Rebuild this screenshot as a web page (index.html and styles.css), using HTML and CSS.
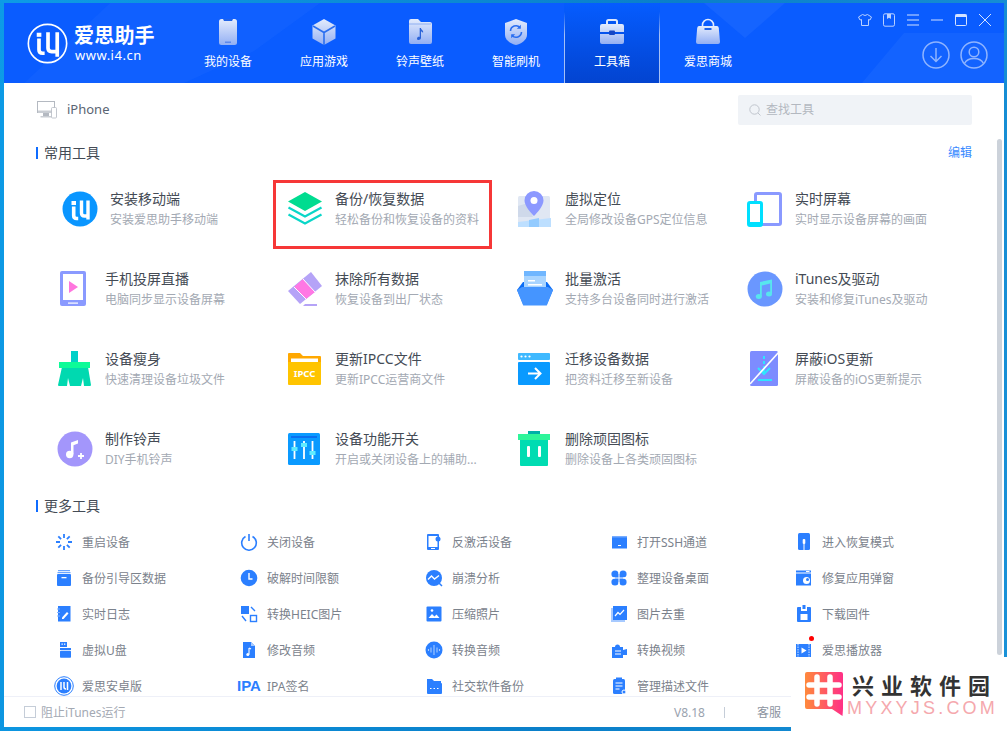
FILE: index.html
```html
<!DOCTYPE html>
<html lang="zh-CN">
<head>
<meta charset="utf-8">
<title>爱思助手</title>
<link rel="stylesheet" href="styles.css">
</head>
<body>
<svg class="defs" width="0" height="0" aria-hidden="true">
  <defs>
    <linearGradient id="g" x1="0" y1="0" x2="0" y2="1"><stop offset="0" stop-color="#e4ecfd"/><stop offset="1" stop-color="#93aff3"/></linearGradient>
    <linearGradient id="wm" x1="0" y1="0" x2="1" y2="0"><stop offset="0" stop-color="#ff8a3c"/><stop offset="1" stop-color="#ff2f86"/></linearGradient>
  </defs>
</svg>
<div class="app">
  <header class="header">
    <svg class="header-bg" viewBox="0 0 1000 80" preserveAspectRatio="none" aria-hidden="true">
      <polygon points="106,0 316,0 250,48 180,80 93,80 20,80" fill="#2a74ff" fill-opacity=".22"/>
      <polygon points="106,0 20,80 0,80 0,0" fill="#0a5cff"/>
      <polygon points="781,0 700,0 741,35" fill="#2a74ff" fill-opacity=".35"/>
      <polygon points="1000,30 900,30 858,80 1000,80" fill="#2a74ff" fill-opacity=".3"/>
    </svg>
    <div class="brand">
      <svg class="brand-mark" viewBox="0 0 40 40" aria-hidden="true">
        <circle cx="20" cy="20" r="18.700" fill="none" stroke="#fff" stroke-width="1.600"/>
        <rect x="9.500" y="9.500" width="4.500" height="4" fill="#fff"/>
        <path d="M11.700 15v11q0 3.500 3.500 3.500h2" fill="none" stroke="#fff" stroke-width="3.600"/>
        <path d="M20.500 9v15.500q0 3.500 3.500 3.500h4M29.500 9v24" fill="none" stroke="#fff" stroke-width="3.600"/>
      </svg>
      <div class="brand-text">
        <div class="brand-name">爱思助手</div>
        <div class="brand-url">www.i4.cn</div>
      </div>
    </div>
    <nav class="nav">
      <a class="nav-item">
        <svg class="nav-icon" viewBox="0 0 28 28"><rect x="5" y="1" width="18" height="26" rx="2.500" fill="url(#g)"/><path d="M9 1h10l-1 2h-8z" fill="#1f62e8"/><rect x="11" y="23.500" width="6" height="1.500" fill="#5d88ec"/></svg>
        <span>我的设备</span>
      </a>
      <a class="nav-item">
        <svg class="nav-icon" viewBox="0 0 28 28"><path d="M14 1l11.500 6.500v13L14 27 2.500 20.500v-13z" fill="url(#g)"/><path d="M3 8l11 6.500L25 8M14 14.500V27" fill="none" stroke="#2a6ef0" stroke-width="1.600"/></svg>
        <span>应用游戏</span>
      </a>
      <a class="nav-item">
        <svg class="nav-icon" viewBox="0 0 28 28"><path d="M3 3q0-2 2-2h7l3 3h9q2 0 2 2v18q0 2-2 2H5q-2 0-2-2z" fill="url(#g)"/><path d="M3 6h22" stroke="#7ea2f0" stroke-width=".8"/><path d="M15 10c0 2 3 2 2 5-.6-1.500-1.500-1.500-2-1.500v6.500c0 2-4 3-4 .5 0-1.500 2-2 2.700-1.500V10z" fill="#2a62d8"/></svg>
        <span>铃声壁纸</span>
      </a>
      <a class="nav-item">
        <svg class="nav-icon" viewBox="0 0 28 28"><path d="M14 1l11 4v12c0 5-6 9-11 10C9 26 3 22 3 17V5z" fill="url(#g)"/><path d="M8.500 13a5.500 5.500 0 0 1 9.500-3.500M19.500 14a5.500 5.500 0 0 1-9.500 3.500" fill="none" stroke="#2a6ef0" stroke-width="1.600"/><path d="M18.800 6.800v4h-4zM9.200 20.200v-4h4z" fill="#2a6ef0"/></svg>
        <span>智能刷机</span>
      </a>
      <a class="nav-item nav-item-active">
        <svg class="nav-icon" viewBox="0 0 28 28"><path d="M9 6V3.500Q9 2 10.500 2h7Q19 2 19 3.500V6" fill="none" stroke="#dfe8fc" stroke-width="2"/><path d="M2 8q0-2 2-2h20q2 0 2 2v6H2zM2 16h24v8q0 2-2 2H4q-2 0-2-2z" fill="url(#g)"/><rect x="11" y="12.500" width="6" height="4.500" rx="1" fill="#1546c4"/></svg>
        <span>工具箱</span>
      </a>
      <a class="nav-item">
        <svg class="nav-icon" viewBox="0 0 28 28"><path d="M8.500 8V7a5.500 5.500 0 0 1 11 0v1" fill="none" stroke="#e4ecfd" stroke-width="1.600"/><path d="M5 8h18q1.500 0 1.800 2L26 24q0 2-2 2H4q-2 0-2-2L3.200 10Q3.500 8 5 8z" fill="url(#g)"/><rect x="10.500" y="10" width="7" height="2" fill="#1f62e8"/></svg>
        <span>爱思商城</span>
      </a>
    </nav>
    <div class="head-right">
      <div class="win-controls">
        <svg class="win-icon" viewBox="0 0 14 14"><path d="M4.500 1.500Q7 3.500 9.500 1.500L13.500 4 12 7l-1.500-.5V12.500h-7V6.500L2 7 .5 4z" fill="none" stroke="#b9d0ff" stroke-width="1"/></svg>
        <svg class="win-icon" viewBox="0 0 14 14"><rect x="1.500" y=".8" width="11" height="12.400" rx="1.500" fill="none" stroke="#b9d0ff"/><path d="M5 1h4v5L7 4.800 5 6z" fill="#b9d0ff"/></svg>
        <svg class="win-icon" viewBox="0 0 14 14"><path d="M1 2h12M1 7h12M1 12h12" stroke="#8fb4ff" stroke-width="1.300"/></svg>
        <svg class="win-icon" viewBox="0 0 14 14"><path d="M1 7h12" stroke="#a4c2ff" stroke-width="1.300"/></svg>
        <svg class="win-icon" viewBox="0 0 14 14"><rect x="1.500" y="1.500" width="11" height="11" rx="1" fill="none" stroke="#d5e3ff"/><rect x="1.500" y="1.500" width="11" height="2.500" fill="#d5e3ff"/></svg>
        <svg class="win-icon" viewBox="0 0 14 14"><path d="M1 1l12 12M13 1L1 13" stroke="#d5e3ff" stroke-width="1"/></svg>
      </div>
      <div class="head-actions">
        <svg class="act-icon" viewBox="0 0 28 28"><circle cx="14" cy="14" r="13" fill="none" stroke="#8fb4ff" stroke-width="1.500"/><path d="M14 7v13M8.500 15l5.500 5.500 5.500-5.500" fill="none" stroke="#8fb4ff" stroke-width="1.500"/></svg>
        <svg class="act-icon" viewBox="0 0 28 28"><circle cx="14" cy="14" r="13" fill="none" stroke="#8fb4ff" stroke-width="1.500"/><circle cx="14" cy="11" r="4.800" fill="none" stroke="#8fb4ff" stroke-width="1.500"/><path d="M4.500 22.500Q7 17.500 14 17.500T23.500 22.500" fill="none" stroke="#8fb4ff" stroke-width="1.500"/></svg>
      </div>
    </div>
  </header>

  <main class="main">
    <div class="toolbar">
      <div class="device">
        <svg class="device-icon" viewBox="0 0 20 18"><rect x=".5" y=".5" width="17" height="11" fill="#fff" stroke="#b4b9c1"/><rect x="1" y="9.500" width="16" height="2.500" fill="#c9cdd3"/><rect x="6" y="12" width="6" height="3" fill="#b4b9c1"/><rect x="3.500" y="15" width="11" height="1.500" fill="#c9cdd3"/><rect x="14.500" y="6.500" width="5" height="10.500" rx="1" fill="#fff" stroke="#b4b9c1" stroke-width=".8"/></svg>
        <span class="device-name">iPhone</span>
      </div>
      <div class="search">
        <svg class="search-icon" viewBox="0 0 12 12"><circle cx="5.500" cy="5.500" r="4.700" fill="none" stroke="#c0c5cd" stroke-width="1"/><path d="M9 9l2.500 2.500" stroke="#c0c5cd"/></svg>
        <span class="search-text">查找工具</span>
      </div>
    </div>

    <div class="section-head section-first">
      <h2 class="section-title">常用工具</h2>
      <a class="edit">编辑</a>
    </div>

    <div class="cards">
      <div class="card card-shift">
        <svg class="card-icon" viewBox="0 0 36 36"><circle cx="18" cy="18" r="17.500" fill="#0a96ff"/><rect x="9.500" y="10" width="4.500" height="4" fill="#fff"/><path d="M11.700 15.500v9q0 3 3 3h1.500" fill="none" stroke="#fff" stroke-width="3.600"/><path d="M19.500 9.500v12.500q0 3 3 3h4M26 9.500v19" fill="none" stroke="#fff" stroke-width="3.400"/></svg>
        <div class="card-text"><div class="card-title">安装移动端</div><div class="card-sub">安装爱思助手移动端</div></div>
      </div>
      <div class="card card-marked">
        <svg class="card-icon" viewBox="0 0 36 36"><path d="M18 1l17 9.500L18 20 1 10.500z" fill="#00dc90"/><path d="M1.500 16.500L18 25.500l16.500-9M1.500 23.500L18 32.500l16.500-9" fill="none" stroke="#0ad6c8" stroke-width="2.200"/></svg>
        <div class="card-text"><div class="card-title">备份/恢复数据</div><div class="card-sub">轻松备份和恢复设备的资料</div></div>
        <span class="mark"></span>
      </div>
      <div class="card">
        <svg class="card-icon" viewBox="0 0 36 36"><rect x="1" y="5" width="32" height="31" rx="1.500" fill="#e0e7f3"/><path d="M1 15l10-3 5 14H1z" fill="#cfd9ea"/><path d="M1 31l33-4v9H1z" fill="#bddfff"/><path d="M12 29l10-2v9H12z" fill="#93cbff"/><path d="M17 0a9.500 9.500 0 0 1 9.500 9.500C26.500 15 20 22 17 25 14 22 7.500 15 7.500 9.500A9.500 9.500 0 0 1 17 0z" fill="#8c99ff"/><circle cx="17" cy="9.500" r="3.500" fill="#fff"/></svg>
        <div class="card-text"><div class="card-title">虚拟定位</div><div class="card-sub">全局修改设备GPS定位信息</div></div>
      </div>
      <div class="card">
        <svg class="card-icon" viewBox="0 0 36 36"><rect x="8.500" y="2.500" width="25" height="31" rx="1.500" fill="#fff" stroke="#8a99ff" stroke-width="3"/><rect x="1.500" y="11.500" width="13" height="23" rx="1.500" fill="#fff" stroke="#00e0ff" stroke-width="3"/><rect x="1" y="31" width="14" height="3.500" fill="#00e0ff"/></svg>
        <div class="card-text"><div class="card-title">实时屏幕</div><div class="card-sub">实时显示设备屏幕的画面</div></div>
      </div>

      <div class="card">
        <svg class="card-icon" viewBox="0 0 36 36"><rect x="3" y="0" width="26" height="35" rx="2" fill="#8a9aff"/><rect x="6" y="3" width="20" height="26" fill="#fff"/><path d="M12 10l9 6-9 6z" fill="#ff75de"/><rect x="11" y="31.500" width="10" height="1.200" fill="#fff"/></svg>
        <div class="card-text"><div class="card-title">手机投屏直播</div><div class="card-sub">电脑同步显示设备屏幕</div></div>
      </div>
      <div class="card">
        <svg class="card-icon" viewBox="0 0 36 36"><path d="M24 1l11 14L13 33 1 20z" fill="#b5a3f7"/><path d="M16 8l12 13-9 7L7 16z" fill="#ff78e4"/><path d="M16 8l12 13M7 16l12 12" stroke="#fff" stroke-width="1"/><path d="M18 33h12v2H16z" fill="#b5a3f7"/></svg>
        <div class="card-text"><div class="card-title">抹除所有数据</div><div class="card-sub">恢复设备到出厂状态</div></div>
      </div>
      <div class="card">
        <svg class="card-icon" viewBox="0 0 36 36"><path d="M6 11L0 19l6 14h24l6-14-6-8z" fill="#0a6cf5"/><path d="M7 1q0-1 1-1h20q1 0 1 1v15H7z" fill="#a8d4ff"/><rect x="7" y="0" width="22" height="5" fill="#6fb6ff"/><rect x="11" y="9" width="7" height="1.500" fill="#fff"/><rect x="11" y="13" width="14" height="1.500" fill="#fff"/><path d="M0 19l5-3h26l5 3-6 15q0 .5-1 .5H7q-1 0-1-.5z" fill="#4595ff"/></svg>
        <div class="card-text"><div class="card-title">批量激活</div><div class="card-sub">支持多台设备同时进行激活</div></div>
      </div>
      <div class="card">
        <svg class="card-icon" viewBox="0 0 36 36"><circle cx="18" cy="18" r="17.500" fill="#6a97ff"/><path d="M13 11l12-2.500v14h-1.800V12.500L14.800 14.500v11H13z" fill="#57e6ee"/><ellipse cx="11.800" cy="25.500" rx="3" ry="2.500" fill="#57e6ee"/><ellipse cx="22" cy="23" rx="3" ry="2.500" fill="#57e6ee"/></svg>
        <div class="card-text"><div class="card-title">iTunes及驱动</div><div class="card-sub">安装和修复iTunes及驱动</div></div>
      </div>

      <div class="card">
        <svg class="card-icon" viewBox="0 0 36 36"><rect x="14" y="0" width="7" height="12" fill="#00d0c8"/><path d="M5 16h26l3 18q0 1-1 1H27l-1-8-2 8H13l-2-8-1 8H2q-1 0-1-1z" fill="#00d9b0"/><rect x="2" y="11" width="31" height="6" fill="#0dfb98"/></svg>
        <div class="card-text"><div class="card-title">设备瘦身</div><div class="card-sub">快速清理设备垃圾文件</div></div>
      </div>
      <div class="card">
        <svg class="card-icon" viewBox="0 0 36 36"><path d="M1 3q0-1 1-1h11l3 3h17q1 0 1 1v5H1z" fill="#ffa800"/><rect x="4" y="7.500" width="27" height="3.500" fill="#fff"/><path d="M1 11h33v22q0 1-1 1H2q-1 0-1-1z" fill="#ffc400"/><text x="17.500" y="26" class="ipcc">IPCC</text></svg>
        <div class="card-text"><div class="card-title">更新IPCC文件</div><div class="card-sub">更新IPCC运营商文件</div></div>
      </div>
      <div class="card">
        <svg class="card-icon" viewBox="0 0 36 36"><rect x="1" y="2" width="32" height="7" rx="1" fill="#3fb9ff"/><circle cx="4.500" cy="5.500" r="1.100" fill="#fff"/><circle cx="8.500" cy="5.500" r="1.100" fill="#fff"/><circle cx="12.500" cy="5.500" r="1.100" fill="#fff"/><rect x="1" y="11" width="32" height="23" rx="1" fill="#0a9aff"/><path d="M11 22.500h12M18 17l5.500 5.500L18 28" fill="none" stroke="#fff" stroke-width="2"/></svg>
        <div class="card-text"><div class="card-title">迁移设备数据</div><div class="card-sub">把资料迁移至新设备</div></div>
      </div>
      <div class="card">
        <svg class="card-icon" viewBox="0 0 36 36"><rect x="3" y="0" width="28" height="35" rx="1.500" fill="#7d8cff"/><path d="M17 5v3M17 10v3M17 15v8M11 17l6 6 6-6" fill="none" stroke="#2ee6ff" stroke-width="2"/><rect x="11" y="28" width="14" height="2" fill="#2ee6ff"/><path d="M32 1L3 33" stroke="#fff" stroke-width="1.600"/></svg>
        <div class="card-text"><div class="card-title">屏蔽iOS更新</div><div class="card-sub">屏蔽设备的iOS更新提示</div></div>
      </div>

      <div class="card">
        <svg class="card-icon" viewBox="0 0 36 36"><circle cx="18" cy="18" r="17.500" fill="#a396fb"/><path d="M14 11.500l7-2.500v3.500l-4.500 1.800v9h-2.500z" fill="#fff"/><circle cx="12.700" cy="23.500" r="3.700" fill="#fff"/><path d="M24 22v6M21 25h6" stroke="#fff" stroke-width="1.800"/></svg>
        <div class="card-text"><div class="card-title">制作铃声</div><div class="card-sub">DIY手机铃声</div></div>
      </div>
      <div class="card">
        <svg class="card-icon" viewBox="0 0 36 36"><rect x="1" y="2" width="32" height="32" rx="1.500" fill="#0a9aff"/><rect x="4" y="5" width="26" height="2" fill="#0a70f0"/><path d="M7.500 10v18M17 10v18M25.500 10v18" stroke="#fff" stroke-width="1.800"/><rect x="4.500" y="16" width="6" height="4" fill="#60ecff"/><rect x="14" y="12" width="6" height="4" fill="#60ecff"/><rect x="22.500" y="20" width="6" height="4" fill="#60ecff"/></svg>
        <div class="card-text"><div class="card-title">设备功能开关</div><div class="card-sub">开启或关闭设备上的辅助...</div></div>
      </div>
      <div class="card">
        <svg class="card-icon" viewBox="0 0 36 36"><rect x="11" y="0" width="12" height="4" fill="#00b0a8"/><rect x="1" y="3" width="32" height="6" fill="#2ef59a"/><path d="M3 9h28v25q0 1-1 1H4q-1 0-1-1z" fill="#00dcb2"/><rect x="10" y="15" width="3" height="11" rx="1" fill="#fff"/><rect x="21" y="15" width="3" height="11" rx="1" fill="#fff"/></svg>
        <div class="card-text"><div class="card-title">删除顽固图标</div><div class="card-sub">删除设备上各类顽固图标</div></div>
      </div>
    </div>

    <div class="section-head section-second">
      <h2 class="section-title">更多工具</h2>
    </div>

    <div class="tools">
      <div class="tool"><svg class="tool-icon" viewBox="0 0 18 18"><path d="M9 1v4M9 13v4M1 9h4M13 9h4M3.300 3.300l2.800 2.800M11.900 11.900l2.800 2.800M14.700 3.300l-2.800 2.800M6.100 11.900l-2.800 2.800" stroke="#2b7fff" stroke-width="1.800"/></svg><span>重启设备</span></div>
      <div class="tool"><svg class="tool-icon" viewBox="0 0 18 18"><path d="M5.500 3.500a7.300 7.300 0 1 0 7 0M9 1v7" fill="none" stroke="#2b7fff" stroke-width="1.600"/></svg><span>关闭设备</span></div>
      <div class="tool"><svg class="tool-icon" viewBox="0 0 18 18"><path d="M3 1h10q1 0 1 1v14q0 1-1 1H3q-1 0-1-1V2q0-1 1-1z" fill="#2b7fff"/><rect x="3.500" y="3" width="9" height="11" fill="#fff"/><rect x="6" y="15" width="4" height="1" fill="#fff"/><circle cx="13" cy="6" r="2.500" fill="#2b7fff"/></svg><span>反激活设备</span></div>
      <div class="tool"><svg class="tool-icon" viewBox="0 0 18 18"><rect x="2" y="3.500" width="15" height="12" fill="#2b7fff"/><rect x="2" y="3.500" width="15" height="1.200" fill="#5c9cff"/><rect x="8" y="12" width="3" height="1" fill="#fff"/></svg><span>打开SSH通道</span></div>
      <div class="tool"><svg class="tool-icon" viewBox="0 0 18 18"><rect x="3" y="0" width="12" height="17" rx="1.500" fill="#2b7fff"/><rect x="7.700" y="6" width="2.600" height="5" rx="1" fill="#fff"/><path d="M9 11v6" stroke="#fff"/></svg><span>进入恢复模式</span></div>

      <div class="tool"><svg class="tool-icon" viewBox="0 0 18 18"><rect x="3" y="1" width="12" height="1.200" fill="#6aa4ff"/><rect x="2.500" y="3" width="13" height="1.200" fill="#6aa4ff"/><rect x="2" y="5" width="14" height="12" rx="1" fill="#2b7fff"/><rect x="6.500" y="8" width="5" height="1.300" fill="#fff"/></svg><span>备份引导区数据</span></div>
      <div class="tool"><svg class="tool-icon" viewBox="0 0 18 18"><circle cx="9" cy="9" r="8.300" fill="#2b7fff"/><path d="M9 4v6h3.500" fill="none" stroke="#fff" stroke-width="1.400"/></svg><span>破解时间限额</span></div>
      <div class="tool"><svg class="tool-icon" viewBox="0 0 18 18"><circle cx="9" cy="9" r="8" fill="#2b7fff"/><path d="M3 10.500l3.500-3.500 3 3 4.500-3.500" fill="none" stroke="#fff" stroke-width="1.400"/><path d="M14 14l3 3" stroke="#2b7fff" stroke-width="1.500"/></svg><span>崩溃分析</span></div>
      <div class="tool"><svg class="tool-icon" viewBox="0 0 18 18"><circle cx="5" cy="5" r="3.600" fill="#2b7fff"/><circle cx="13" cy="5" r="3.600" fill="#2b7fff"/><circle cx="5" cy="13" r="3.600" fill="#2b7fff"/><circle cx="13" cy="13" r="3.600" fill="#2b7fff"/><rect x="5" y="5" width="8" height="8" fill="#2b7fff"/><path d="M9 1v16M1 9h16" stroke="#fff" stroke-width="1"/></svg><span>整理设备桌面</span></div>
      <div class="tool"><svg class="tool-icon" viewBox="0 0 18 18"><rect x="1" y="1.500" width="15" height="15" fill="#2b7fff"/><rect x="1" y="3.500" width="15" height="1" fill="#fff"/><rect x="11" y="2" width="3.500" height="1" fill="#fff"/><circle cx="11.500" cy="11.500" r="3.500" fill="#fff"/><circle cx="12.500" cy="10.500" r="1.500" fill="#2b7fff"/></svg><span>修复应用弹窗</span></div>

      <div class="tool"><svg class="tool-icon" viewBox="0 0 18 18"><rect x="3" y="1" width="12.500" height="15.500" fill="#2b7fff"/><path d="M2 4h3M2 7.500h3M2 11h3" stroke="#7fb0ff" stroke-width="1"/><path d="M7 12.500l5-5.500 1.500 1.500-5 5.500H7z" fill="#fff"/></svg><span>实时日志</span></div>
      <div class="tool"><svg class="tool-icon" viewBox="0 0 18 18"><rect x="1" y="1" width="8" height="8" fill="#2b7fff"/><rect x="10.500" y="10.500" width="6" height="6" fill="none" stroke="#2b7fff" stroke-width="1.400"/><path d="M11 2l4 4M2 11l4 5" fill="none" stroke="#2b7fff" stroke-width="1.400"/></svg><span>转换HEIC图片</span></div>
      <div class="tool"><svg class="tool-icon" viewBox="0 0 18 18"><rect x="1.500" y="1.500" width="15" height="15" rx="1" fill="#2b7fff"/><path d="M3.500 13l3.500-4 2.500 2.500 2-2 3 3.500z" fill="#fff"/><circle cx="7" cy="5.500" r="1.300" fill="#fff"/></svg><span>压缩照片</span></div>
      <div class="tool"><svg class="tool-icon" viewBox="0 0 18 18"><rect x="1" y="3" width="14" height="14" fill="#a7caff"/><rect x="3" y="1" width="14" height="14" fill="#2b7fff"/><path d="M5 11l3-3.500 2 2L14 5" fill="none" stroke="#fff" stroke-width="1.200"/></svg><span>图片去重</span></div>
      <div class="tool"><svg class="tool-icon" viewBox="0 0 18 18"><path d="M2 3q0-1 1-1h3v4h6V2h3q1 0 1 1v13q0 1-1 1H3q-1 0-1-1z" fill="#2b7fff"/><rect x="7.500" y="0" width="3" height="4" fill="#2b7fff"/><rect x="5.500" y="9" width="7" height="6" fill="#fff"/></svg><span>下载固件</span></div>

      <div class="tool"><svg class="tool-icon" viewBox="0 0 18 18"><rect x="5" y="1" width="7" height="5" fill="#2b7fff"/><rect x="6.500" y="2.500" width="1.300" height="1.300" fill="#fff"/><rect x="9" y="2.500" width="1.300" height="1.300" fill="#fff"/><rect x="5" y="7" width="11" height="2" fill="#2b7fff"/><rect x="5" y="9.700" width="11" height="7" rx=".8" fill="#2b7fff"/></svg><span>虚拟U盘</span></div>
      <div class="tool"><svg class="tool-icon" viewBox="0 0 18 18"><path d="M3 1h8l4 4v12H3z" fill="#2b7fff"/><path d="M11 1l4 4h-4z" fill="#a7caff"/><path d="M9 7v6.500" stroke="#fff" stroke-width="1.100"/><circle cx="7.800" cy="13.500" r="1.500" fill="#fff"/><path d="M9 7l2 1" stroke="#fff" stroke-width="1.100"/></svg><span>修改音频</span></div>
      <div class="tool"><svg class="tool-icon" viewBox="0 0 18 18"><circle cx="9" cy="9" r="8.500" fill="#2b7fff"/><path d="M3.500 8v2M6 6.500v5M9 4v10M12 6.500v5M14.500 8v2" stroke="#a7caff" stroke-width="1.100"/></svg><span>转换音频</span></div>
      <div class="tool"><svg class="tool-icon" viewBox="0 0 18 18"><path d="M2 6h3a2.500 2.500 0 0 1 5 0h3v3l4-1v6h-4v3H2z" fill="#2b7fff"/><path d="M5 10h6M5 13h6" stroke="#fff" stroke-width="1"/></svg><span>转换视频</span></div>
      <div class="tool"><svg class="tool-icon" viewBox="0 0 18 18"><rect x="1" y="3" width="15" height="13" fill="#2b7fff"/><path d="M3 3v13M14 3v13" stroke="#fff" stroke-width=".8" stroke-dasharray="1.500 1"/><path d="M6.500 6.500l5 3-5 3z" fill="#fff"/></svg><span>爱思播放器</span><i class="dot"></i></div>

      <div class="tool"><svg class="tool-icon tool-icon-wide" viewBox="0 0 20 20"><circle cx="10" cy="10" r="9.300" fill="none" stroke="#2b7fff" stroke-width="1"/><circle cx="10" cy="10" r="7.400" fill="#2b7fff"/><path d="M7 6v8M10 6v5q0 2 2 2M13.500 6v8" fill="none" stroke="#fff" stroke-width="1.500"/></svg><span>爱思安卓版</span></div>
      <div class="tool"><b class="ipa">IPA</b><span>IPA签名</span></div>
      <div class="tool"><svg class="tool-icon" viewBox="0 0 18 18"><path d="M2 2h5l2 2h7v3H2z" fill="#2b7fff"/><rect x="2" y="6" width="15" height="11" rx="1" fill="#2b7fff"/><path d="M5 11.500h1.500M8.500 11.500H10M12 11.500h1.500" stroke="#fff" stroke-width="1.200"/></svg><span>社交软件备份</span></div>
      <div class="tool"><svg class="tool-icon" viewBox="0 0 18 18"><rect x="3" y="2" width="12" height="15" rx="1.500" fill="#2b7fff"/><rect x="6" y="0.500" width="6" height="2.500" fill="#2b7fff"/><path d="M5.500 6h7M5.500 9h7M5.500 12h4" stroke="#fff"/><circle cx="14" cy="15" r="2" fill="#2b7fff" stroke="#fff"/></svg><span>管理描述文件</span></div>
    </div>
  </main>

  <footer class="footer">
    <label class="itunes"><i class="check"></i><span>阻止iTunes运行</span></label>
    <div class="foot-right"><span class="version">V8.18</span><i class="sep"></i><span class="service">客服</span></div>
  </footer>
  <div class="scrollbar"></div>
</div>

<aside class="watermark">
  <svg class="wm-logo" viewBox="0 0 38 44" aria-hidden="true"><path d="M2 0h34q2 0 2 2v34q0 1.500-.5 8L27 37H2q-2 0-2-2V2q0-2 2-2z" fill="url(#wm)"/><path d="M12 5v27M25 5v27M4 13h30M4 25h30" stroke="#fff" stroke-width="5.500" stroke-linecap="round"/></svg>
  <div class="wm-text">
    <div class="wm-name">兴业软件园</div>
    <div class="wm-url">MYXYJS.COM</div>
  </div>
</aside>
</body>
</html>
```
FILE: styles.css
```css
* { box-sizing: border-box; }
html, body { margin: 0; height: 100%; overflow: hidden; }
body {
  width: 1007px;
  height: 731px;
  padding: 3px 3px 4px 4px;
  background: linear-gradient(100deg, #0d9be6 0%, #0a7fc9 60%, #1a92d8 100%);
  font-family: "Noto Sans", "Noto Sans CJK SC", sans-serif;
  position: relative;
}
.defs { position: absolute; }

.app {
  position: relative;
  height: 724px;
  display: flex;
  flex-direction: column;
  background: #fff;
}

/* header */
.header {
  position: relative;
  flex: 0 0 80px;
  display: flex;
  background: #0a5cff;
  color: #fff;
}
.header-bg { position: absolute; inset: 0; width: 100%; height: 100%; }
.brand {
  position: relative;
  flex: 0 0 176px;
  display: flex;
  align-items: flex-start;
  padding: 20px 0 0 23px;
  gap: 6px;
}
.brand-mark { width: 41px; height: 41px; flex: none; }
.brand-name { font-size: 20px; line-height: 24px; font-weight: 700; letter-spacing: .2px; margin-top: 1px; }
.brand-url { font-size: 13px; line-height: 14px; letter-spacing: .5px; margin-left: 1px; }
.nav { position: relative; display: flex; }
.nav-item {
  width: 96px;
  height: 80px;
  padding-top: 15px;
  display: flex;
  flex-direction: column;
  align-items: center;
  font-size: 12px;
  line-height: 16px;
}
.nav-icon { width: 28px; height: 28px; margin-bottom: 8px; }
.nav-item-active {
  background: linear-gradient(#055cff, #0344d0);
  border-left: 1px solid #a6c0f5;
  border-right: 1px solid #a6c0f5;
  border-image: linear-gradient(rgba(166, 192, 245, 0) 12%, #a6c0f5 40%) 1;
}
.head-right {
  position: relative;
  margin-left: auto;
  padding: 10px 12px 0 0;
  display: flex;
  flex-direction: column;
  align-items: flex-end;
}
.win-controls { display: flex; gap: 10px; }
.win-icon { width: 14px; height: 14px; }
.head-actions { display: flex; gap: 10px; margin: 14px 4px 0 0; }
.act-icon { width: 28px; height: 28px; }

/* main */
.main {
  flex: 1;
  min-height: 0;
  overflow: hidden;
  padding-top: 12px;
}
.toolbar {
  height: 30px;
  display: flex;
  justify-content: space-between;
  align-items: center;
  padding: 0 32px 0 33px;
}
.device { display: flex; align-items: center; gap: 10px; font-size: 13px; color: #5a6573; }
.device-name { margin-top: -2px; }
.device-icon { width: 20px; height: 18px; }
.search {
  width: 234px;
  height: 30px;
  background: #f0f3f7;
  border-radius: 2px;
  display: flex;
  align-items: center;
  gap: 5px;
  padding-left: 11px;
  font-size: 12px;
  color: #b3b8c0;
}
.search-text { margin-top: -2px; }
.search-icon { width: 12px; height: 12px; }

.section-head {
  display: flex;
  justify-content: space-between;
  align-items: center;
  height: 20px;
  padding: 0 32px 0 32px;
}
.section-first { margin-top: 18px; }
.section-second { margin-top: 27px; }
.section-title {
  margin: 0;
  border-left: 2px solid #0f6cff;
  padding-left: 6px;
  font-size: 14px;
  line-height: 12px;
  height: 12px;
  font-weight: 400;
  color: #444b55;
}
.edit { font-size: 12px; color: #3a8bff; margin-top: -2px; }

.cards {
  margin-top: 26px;
  padding-left: 53px;
  display: grid;
  grid-template-columns: repeat(4, 230px);
  grid-auto-rows: 40px;
  row-gap: 40px;
}
.card { position: relative; display: flex; align-items: center; gap: 12px; }
.card-shift { padding-left: 5px; }
.card-icon { width: 36px; height: 36px; flex: none; }
.card-title { font-size: 14px; line-height: 20px; color: #444b55; }
.card-sub { font-size: 12px; line-height: 20px; margin-top: 1px; margin-bottom: -1px; color: #a3a9b3; white-space: nowrap; }
.ipcc { font-family: "Noto Sans", sans-serif; font-size: 9.500px; font-weight: 700; fill: #fff; text-anchor: middle; }
.mark {
  position: absolute;
  left: -14px;
  top: -9px;
  width: 219px;
  height: 69px;
  border: 3px solid #f63737;
}

.tools {
  margin-top: 8px;
  padding-left: 51px;
  display: grid;
  grid-template-columns: repeat(5, 185px);
  grid-auto-rows: 36px;
}
.tool {
  position: relative;
  display: flex;
  align-items: center;
  gap: 9px;
  font-size: 12px;
  color: #7b828c;
  white-space: nowrap;
}
.tool-icon { width: 18px; height: 18px; flex: none; }
.tool-icon-wide { width: 20px; height: 20px; margin: 0 -1px; }
.ipa {
  width: 18px;
  display: flex;
  justify-content: center;
  font-size: 15px;
  line-height: 18px;
  font-weight: 700;
  color: #2b7fff;
  font-family: "Liberation Sans", sans-serif;
}
.dot {
  position: absolute;
  left: 14px;
  top: 4px;
  width: 5px;
  height: 5px;
  border-radius: 50%;
  background: #f00;
}

/* footer */
.footer {
  flex: 0 0 31px;
  border-top: 1px solid #eef0f8;
  display: flex;
  justify-content: space-between;
  align-items: center;
  padding: 0 223px 0 20px;
  font-size: 12px;
  color: #a3a9b3;
}
.itunes { display: flex; align-items: center; gap: 5px; }
.check { width: 12px; height: 12px; border: 1px solid #c5cdd8; background: #fff; }
.foot-right { display: flex; align-items: center; }
.version { color: #9aa3af; }
.sep { width: 1px; height: 11px; background: #c5cdd8; margin: 0 32px 0 19px; }
.service { color: #8c949f; }

.scrollbar {
  position: absolute;
  top: 136px;
  left: 993px;
  width: 5px;
  height: 516px;
  border-radius: 3px;
  background: #ccd2da;
}

/* watermark */
.watermark {
  position: absolute;
  left: 791px;
  top: 657px;
  width: 216px;
  height: 74px;
  background: #fff;
  display: flex;
  padding: 15px 0 0 14px;
  gap: 6px;
}
.wm-logo { width: 38px; height: 44px; flex: none; }
.wm-name {
  font-family: "Noto Sans CJK SC", sans-serif;
  font-size: 22px;
  line-height: 24px;
  font-weight: 700;
  letter-spacing: 7px;
  color: #333;
  white-space: nowrap;
  margin-left: 3px;
}
.wm-url {
  font-family: "Liberation Sans", sans-serif;
  font-size: 18px;
  line-height: 20px;
  letter-spacing: 3.200px;
  color: #f5a8ad;
  white-space: nowrap;
  margin: 2px 0 0 -2px;
}
```
